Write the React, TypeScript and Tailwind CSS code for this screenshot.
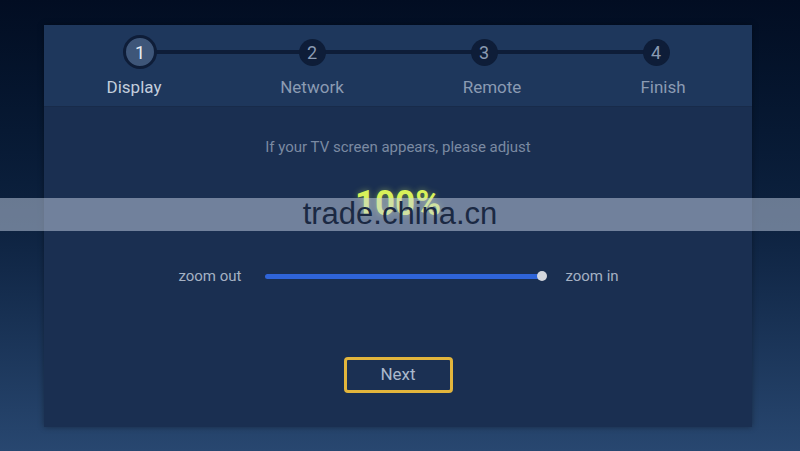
import React from 'react';

const steps = [
  { n: '1', label: 'Display', active: true, shift: '-ml-[12px]' },
  { n: '2', label: 'Network', active: false, shift: '' },
  { n: '3', label: 'Remote', active: false, shift: 'ml-[16px]' },
  { n: '4', label: 'Finish', active: false, shift: 'ml-[14px]' },
];

const App = () => {
  return (
    <div className="relative w-[800px] h-[451px] overflow-hidden bg-gradient-to-b from-[#020d22] via-[#0d2240] to-[#284770] pt-[25px] pl-[44px] font-['Roboto',sans-serif]">
      {/* Setup panel */}
      <div className="w-[708px] h-[402px] flex flex-col bg-[#1a2f51] shadow-[0_0_6px_rgba(0,0,0,0.35)]">
        {/* Stepper header */}
        <div className="h-[82px] bg-[#1e375c] border-b border-[#182b4a] pt-[10px]">
          <div className="relative w-[688px] ml-[10px] grid grid-cols-4">
            <div className="absolute left-[86px] right-[86px] top-[15px] h-[4px] bg-[#0e1d38]" />
            {steps.map(s => (
              <div key={s.n} className="relative flex flex-col items-center">
                <div className="h-[34px] flex items-center justify-center">
                  {s.active ? (
                    <div className="w-[34px] h-[34px] rounded-full bg-[#3e5679] border-[3px] border-[#0e1d38] flex items-center justify-center text-[18px] text-[#e8edf4]">
                      {s.n}
                    </div>
                  ) : (
                    <div className="w-[27px] h-[27px] rounded-full bg-[#0e1d38] flex items-center justify-center text-[18px] text-[#8a9ab2]">
                      {s.n}
                    </div>
                  )}
                </div>
                <span className={`mt-[8px] text-[17px] leading-[20px] ${s.shift} ${s.active ? 'text-[#c3cedd]' : 'text-[#8b9bb3]'}`}>
                  {s.label}
                </span>
              </div>
            ))}
          </div>
        </div>

        {/* Body */}
        <div className="flex flex-col items-center">
          <p className="mt-[31px] text-[15px] leading-[18px] text-[#7a8aa2]">If your TV screen appears, please adjust</p>
          <div className="mt-[28px] text-[35px] leading-[40px] font-bold text-[#d8f15a] [text-shadow:0_0_6px_rgba(216,241,90,0.45)]">100%</div>

          <div className="mt-[43px] flex items-center ml-[1px]">
            <span className="text-[15px] leading-[18px] text-[#a5b1c3] w-[87px]">zoom out</span>
            <div className="relative w-[282px] h-[10px] flex items-center">
              <div className="w-[277px] h-[5px] rounded-full bg-[#2f64d8]" />
              <div className="absolute right-0 w-[10px] h-[10px] rounded-full bg-[#d3d7dd]" />
            </div>
            <span className="ml-[18px] text-[15px] leading-[18px] text-[#a5b1c3]">zoom in</span>
          </div>

          <button className="mt-[72px] w-[109px] h-[36px] rounded-[4px] border-[3px] border-[#e2b53c] bg-[#1b3053] text-[17px] text-[#aab8cc] flex items-center justify-center">
            Next
          </button>
        </div>
      </div>

      {/* Watermark band */}
      <div className="absolute left-0 right-0 top-[198px] h-[33px] bg-[rgba(200,212,232,0.5)] flex items-center justify-center">
        <span className="font-['Liberation_Sans',Arial,sans-serif] text-[31px] leading-[33px] text-[#1b2943] -mt-[2px]">trade.china.cn</span>
      </div>
    </div>
  );
};

export default App;
